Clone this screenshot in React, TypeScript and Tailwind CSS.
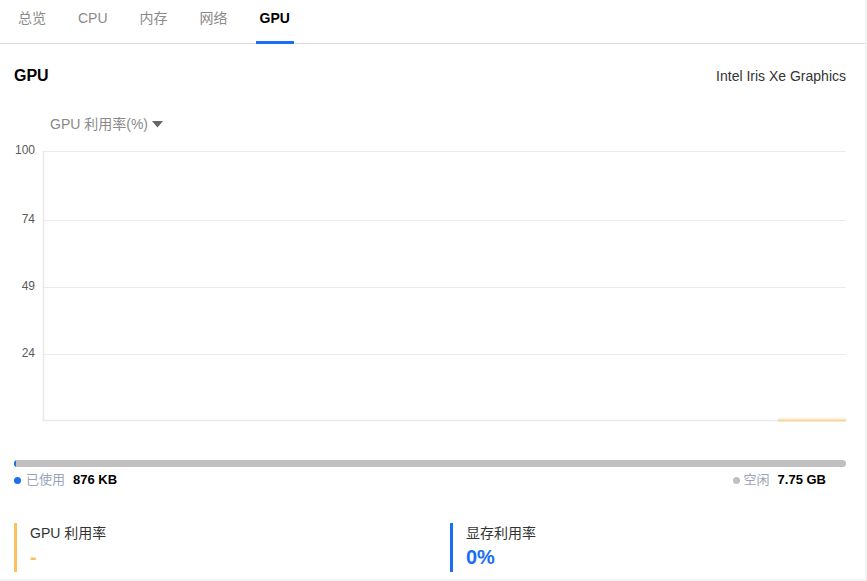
import React from 'react';

const tabs = ['总览', 'CPU', '内存', '网络', 'GPU'];
const ticks = [
    { label: '100', y: 10 },
    { label: '74', y: 79 },
    { label: '49', y: 146 },
    { label: '24', y: 213 },
];

const UsageChart: React.FC = () => (
    <svg width="832" height="285" className="block">
        {ticks.map((t) => (
            <g key={t.label}>
                <line x1="29" x2="832" y1={t.y + 0.5} y2={t.y + 0.5} stroke="#ebebeb" strokeWidth="1" />
                <text
                    x="21"
                    y={t.y}
                    textAnchor="end"
                    dominantBaseline="middle"
                    fontSize="12"
                    fill="#5a5a5a"
                    fontFamily='"Liberation Sans", Arial, sans-serif'
                >
                    {t.label}
                </text>
            </g>
        ))}
        {/* axes */}
        <line x1="29.5" x2="29.5" y1="10" y2="280" stroke="#e8e8e8" strokeWidth="1.5" />
        <line x1="29" x2="832" y1="279.5" y2="279.5" stroke="#ebebeb" strokeWidth="1.5" />
        {/* utilisation series, flat at zero */}
        <line x1="764" x2="832" y1="277.5" y2="277.5" stroke="#fbf1de" strokeWidth="1.5" />
        <line x1="764" x2="832" y1="279.5" y2="279.5" stroke="#f6d49c" strokeWidth="2" />
    </svg>
);

const StatBlock: React.FC<{ title: string; value: string; accent: 'orange' | 'blue' }> = ({ title, value, accent }) => (
    <div
        className={
            accent === 'orange'
                ? 'border-l-[3px] border-[#fbc15e] pl-[13px]'
                : 'border-l-[3px] border-[#1a6ef5] pl-[13px]'
        }
    >
        <div className="text-[14px] leading-[20px] text-[#333]">{title}</div>
        <div
            className={
                accent === 'orange'
                    ? 'text-[20px] leading-[29px] font-bold text-[#fbc15e]'
                    : 'text-[20px] leading-[29px] font-bold text-[#1a6ef5]'
            }
        >
            {value}
        </div>
    </div>
);

export default function App() {
    return (
        <div
            className="w-[867px] h-[581px] bg-[#f2f2f2] overflow-hidden"
            style={{ fontFamily: '"Liberation Sans", Arial, "Noto Sans CJK SC", sans-serif' }}
        >
            <div className="w-[865px] bg-white">
                {/* tab bar */}
                <div className="h-[44px] border-b border-[#dcdcdc] flex gap-6 pl-[14px]">
                    {tabs.map((tab) => (
                        <div key={tab} className="relative px-1 pt-[8px] text-[14px] leading-[20px]">
                            <span className={tab === 'GPU' ? 'font-bold text-black' : 'text-[#8a8a8a]'}>{tab}</span>
                            {tab === 'GPU' && (
                                <div className="absolute left-0 right-0 bottom-[-1px] h-[3px] bg-[#1a6ef5]" />
                            )}
                        </div>
                    ))}
                </div>
            </div>

            <div className="w-[865px] bg-white pl-[14px] pr-[19px] pb-[7px]">
                <div className="flex items-center justify-between pt-[19px]">
                    <div className="text-[16px] leading-[24px] font-bold text-black">GPU</div>
                    <div className="text-[14px] leading-[24px] text-[#333] pt-[1px]">Intel Iris Xe Graphics</div>
                </div>

                <div className="mt-[26px] ml-[36px] flex items-center gap-[4px] text-[14px] leading-[20px] text-[#8a8a8a]">
                    <span>GPU 利用率(%)</span>
                    <svg width="11" height="7" viewBox="0 0 11 7">
                        <path d="M0 0 H11 L5.5 6.5 Z" fill="#666" />
                    </svg>
                </div>

                <div className="mt-[7px]">
                    <UsageChart />
                </div>

                {/* memory usage bar */}
                <div className="mt-[34px] h-[7px] rounded-full bg-[#c0c0c0] overflow-hidden">
                    <div className="h-full w-[2px] bg-[#1a6ef5]" />
                </div>

                <div className="mt-[4px] flex items-center justify-between text-[13px] leading-[18px]">
                    <div className="flex items-center">
                        <span className="w-[7px] h-[7px] rounded-full bg-[#1a6ef5] mr-[5px] mt-[1px]" />
                        <span className="text-[#9aa4b8] mr-[8px]">已使用</span>
                        <span className="font-bold text-black">876 KB</span>
                    </div>
                    <div className="flex items-center mr-[20px]">
                        <span className="w-[7px] h-[7px] rounded-full bg-[#c0c0c0] mr-[4px] mt-[1px]" />
                        <span className="text-[#9aa4b8] mr-[8px]">空闲</span>
                        <span className="font-bold text-black">7.75 GB</span>
                    </div>
                </div>

                <div className="mt-[34px] flex">
                    <div className="w-[436px]">
                        <StatBlock title="GPU 利用率" value="-" accent="orange" />
                    </div>
                    <div>
                        <StatBlock title="显存利用率" value="0%" accent="blue" />
                    </div>
                </div>
            </div>
        </div>
    );
}
